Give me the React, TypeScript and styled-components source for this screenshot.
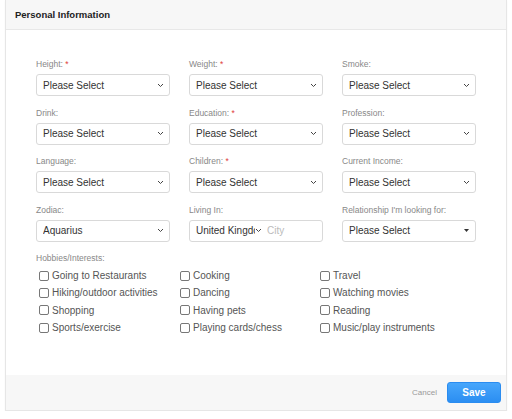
import React from 'react';
import styled, { createGlobalStyle } from 'styled-components';

const GlobalStyle = createGlobalStyle`
  html, body {
    margin: 0;
    padding: 0;
    background: #ffffff;
    font-family: "Liberation Sans", Arial, sans-serif;
  }
`;

const Card = styled.div`
  margin: 0 0 0 5px;
  width: 502px;
  height: 411px;
  border: 1px solid #e6e6e6;
  border-top: none;
  display: flex;
  flex-direction: column;
  box-sizing: border-box;
  box-shadow: 0 1px 2px rgba(0, 0, 0, 0.04);
`;

const Header = styled.div`
  height: 30px;
  background: #f7f7f7;
  border-bottom: 1px solid #e8e8e8;
  display: flex;
  align-items: center;
  padding-left: 9px;
  box-sizing: border-box;
`;

const Title = styled.h2`
  margin: 0;
  font-size: 9.5px;
  font-weight: bold;
  color: #222;
`;

const Body = styled.div`
  flex: 1;
  padding: 29px 30px 0 30px;
`;

const FieldGrid = styled.div`
  display: grid;
  grid-template-columns: repeat(3, 134px);
  column-gap: 19px;
  row-gap: 11.5px;
`;

const Field = styled.div`
  display: flex;
  flex-direction: column;
`;

const Label = styled.label`
  font-size: 8.5px;
  line-height: 10px;
  color: #888;
  margin-bottom: 5px;
  white-space: nowrap;
`;

const Required = styled.span`
  color: #e0413a;
`;

const SelectBox = styled.div`
  height: 22px;
  border: 1px solid #d9d9d9;
  border-radius: 3px;
  box-sizing: border-box;
  display: flex;
  align-items: center;
  padding: 0 5px 0 6px;
  font-size: 10px;
  color: #333;
  background: #fff;
`;

const SelectText = styled.span`
  flex: 1;
  white-space: nowrap;
  overflow: hidden;
`;

const SplitText = styled.span<{ $w: number }>`
  width: ${(p) => p.$w}px;
  white-space: nowrap;
  overflow: hidden;
`;

const CityText = styled.span`
  margin-left: 5px;
  color: #bbb;
`;

const HobbyLabel = styled(Label)`
  margin: 11px 0 4.5px;
  display: block;
`;

const HobbyGrid = styled.div`
  display: grid;
  grid-template-columns: 141px 140px 160px;
  grid-auto-rows: 17.3px;
  padding-left: 3px;
`;

const Hobby = styled.div`
  display: flex;
  align-items: center;
  font-size: 10px;
  color: #555;
  white-space: nowrap;
`;

const Box = styled.span`
  width: 8px;
  height: 8px;
  border: 1px solid #777;
  border-radius: 2px;
  margin-right: 3px;
  flex-shrink: 0;
`;

const Footer = styled.div`
  height: 35px;
  background: #f7f7f7;
  display: flex;
  align-items: center;
  justify-content: flex-end;
  padding-right: 5px;
  gap: 10px;
`;

const CancelButton = styled.button`
  border: none;
  background: none;
  font-family: inherit;
  font-size: 8px;
  color: #999;
  padding: 0;
`;

const SaveButton = styled.button`
  width: 54px;
  height: 21px;
  border: 1px solid #2a8cf0;
  border-radius: 3px;
  background: linear-gradient(#47a6fb, #2b8ef2);
  color: #fff;
  font-family: inherit;
  font-size: 10px;
  font-weight: bold;
`;

const Chevron = () => (
  <svg width="7" height="5" viewBox="0 0 7 5">
    <path d="M1 1 L3.5 3.5 L6 1" fill="none" stroke="#444" strokeWidth="1" />
  </svg>
);

const Caret = () => (
  <svg width="7" height="5" viewBox="0 0 7 5">
    <path d="M1 1 H6 L3.5 4 Z" fill="#333" />
  </svg>
);

type FieldDef = { label: string; required?: boolean; value?: string; kind?: 'caret' | 'living' };

const fields: FieldDef[] = [
  { label: 'Height:', required: true },
  { label: 'Weight:', required: true },
  { label: 'Smoke:' },
  { label: 'Drink:' },
  { label: 'Education:', required: true },
  { label: 'Profession:' },
  { label: 'Language:' },
  { label: 'Children:', required: true },
  { label: 'Current Income:' },
  { label: 'Zodiac:', value: 'Aquarius' },
  { label: 'Living In:', kind: 'living' },
  { label: "Relationship I'm looking for:", kind: 'caret' },
];

const hobbies = [
  'Going to Restaurants', 'Cooking', 'Travel',
  'Hiking/outdoor activities', 'Dancing', 'Watching movies',
  'Shopping', 'Having pets', 'Reading',
  'Sports/exercise', 'Playing cards/chess', 'Music/play instruments',
];

const App: React.FC = () => (
  <>
    <GlobalStyle />
    <Card>
      <Header>
        <Title>Personal Information</Title>
      </Header>
      <Body>
        <FieldGrid>
          {fields.map((f) => (
            <Field key={f.label}>
              <Label>
                {f.label}
                {f.required && <Required> *</Required>}
              </Label>
              {f.kind === 'living' ? (
                <SelectBox>
                  <SplitText $w={59}>United Kingdom</SplitText>
                  <Chevron />
                  <CityText>City</CityText>
                </SelectBox>
              ) : (
                <SelectBox>
                  <SelectText>{f.value ?? 'Please Select'}</SelectText>
                  {f.kind === 'caret' ? <Caret /> : <Chevron />}
                </SelectBox>
              )}
            </Field>
          ))}
        </FieldGrid>
        <HobbyLabel>Hobbies/Interests:</HobbyLabel>
        <HobbyGrid>
          {hobbies.map((h) => (
            <Hobby key={h}>
              <Box />
              {h}
            </Hobby>
          ))}
        </HobbyGrid>
      </Body>
      <Footer>
        <CancelButton>Cancel</CancelButton>
        <SaveButton>Save</SaveButton>
      </Footer>
    </Card>
  </>
);

export default App;
